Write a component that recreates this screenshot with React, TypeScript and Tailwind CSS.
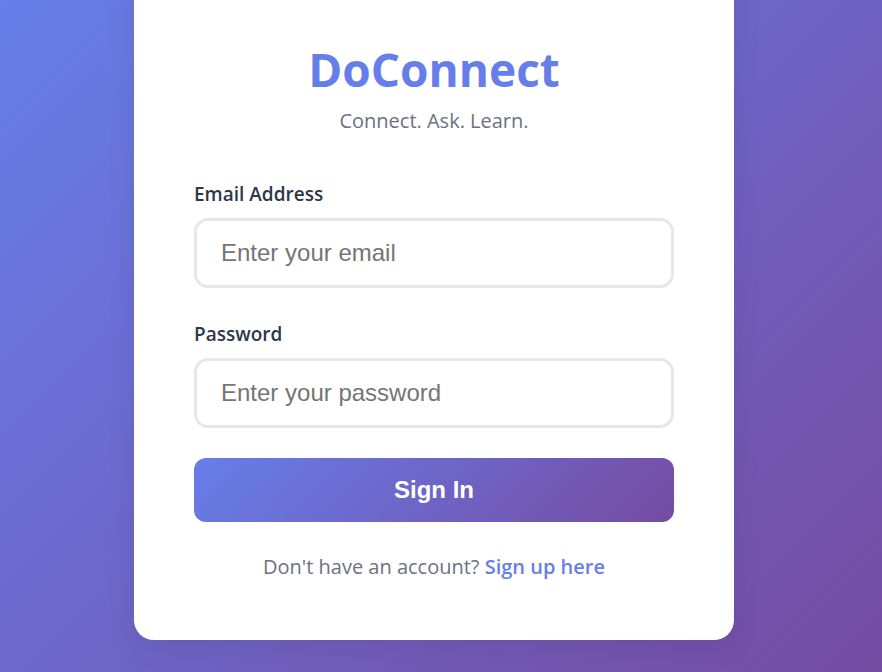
export default function App() {
  return (
    <div className="h-screen overflow-hidden bg-[linear-gradient(135deg,#667eea_0%,#764ba2_100%)] flex justify-center pr-[14px] font-['Open_Sans',sans-serif]">
      <div className="w-[600px] -mt-[40px] h-fit rounded-[20px] bg-white px-[60px] pt-[80px] pb-[59px] shadow-[0_8px_30px_rgba(0,0,0,0.08)]">
        <h1 className="text-center text-[46px] leading-[58px] font-bold text-[#667eea]">DoConnect</h1>
        <p className="mt-[9px] text-center text-[20px] leading-[28px] text-[#6b7280]">Connect. Ask. Learn.</p>

        <form className="mt-[47px]" onSubmit={(e) => e.preventDefault()}>
          <label className="block text-[19px] leading-[24px] font-semibold text-[#2d3748]">Email Address</label>
          <input
            type="email"
            placeholder="Enter your email"
            className="mt-[12px] block w-full h-[70px] rounded-[14px] border-[3px] border-[#e5e7eb] px-[24px] text-[24px] font-['Liberation_Sans',Arial,sans-serif] text-[#333] placeholder:text-[#757575] outline-none"
          />

          <label className="mt-[34px] block text-[19px] leading-[24px] font-semibold text-[#2d3748]">Password</label>
          <input
            type="password"
            placeholder="Enter your password"
            className="mt-[12px] block w-full h-[70px] rounded-[14px] border-[3px] border-[#e5e7eb] px-[24px] text-[24px] font-['Liberation_Sans',Arial,sans-serif] text-[#333] placeholder:text-[#757575] outline-none"
          />

          <button
            type="submit"
            className="mt-[30px] block w-full h-[64px] rounded-[12px] bg-[linear-gradient(135deg,#667eea_0%,#764ba2_100%)] text-[24px] font-bold text-white font-['Liberation_Sans',Arial,sans-serif]"
          >
            Sign In
          </button>
        </form>

        <p className="mt-[31px] text-center text-[20px] leading-[28px] text-[#6b7280]">
          Don't have an account?{" "}
          <a href="#" className="font-semibold text-[#667eea]">Sign up here</a>
        </p>
      </div>
    </div>
  );
}
